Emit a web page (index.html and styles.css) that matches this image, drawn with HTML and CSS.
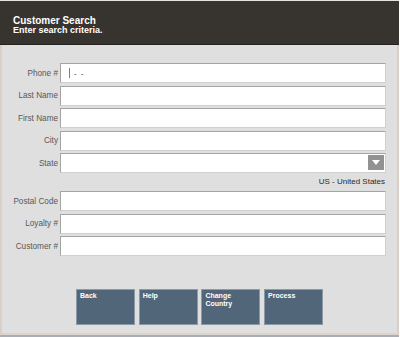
FILE: index.html
```html
<!DOCTYPE html>
<html lang="en">
<head>
    <meta charset="UTF-8">
    <meta name="viewport" content="width=device-width, initial-scale=1.0">
    <title>Customer Search</title>
    <link rel="stylesheet" href="styles.css">
</head>
<body>
    <div class="screen">
        <!-- Title bar -->
        <div class="title-bar">
            <h1>Customer Search</h1>
            <p>Enter search criteria.</p>
        </div>

        <div class="content">
            <!-- Search fields -->
            <form class="search-form">
                <div class="field">
                    <label>Phone #</label>
                    <div class="input phone"><span class="caret"></span><span class="mask">-</span><span class="mask">-</span></div>
                </div>
                <div class="field">
                    <label>Last Name</label>
                    <div class="input"></div>
                </div>
                <div class="field">
                    <label>First Name</label>
                    <div class="input"></div>
                </div>
                <div class="field">
                    <label>City</label>
                    <div class="input"></div>
                </div>
                <div class="field">
                    <label>State</label>
                    <div class="input select"><span class="drop"></span></div>
                </div>
                <div class="country">US - United States</div>
                <div class="field">
                    <label>Postal Code</label>
                    <div class="input"></div>
                </div>
                <div class="field">
                    <label>Loyalty #</label>
                    <div class="input"></div>
                </div>
                <div class="field">
                    <label>Customer #</label>
                    <div class="input"></div>
                </div>
            </form>

            <!-- Action buttons -->
            <div class="actions">
                <button type="button">Back</button>
                <button type="button">Help</button>
                <button type="button">Change Country</button>
                <button type="button">Process</button>
            </div>
        </div>
    </div>
</body>
</html>
```

FILE: styles.css
```css
body {
    margin: 0;
    font-family: "Liberation Sans", Arial, sans-serif;
    background: #ffffff;
}
.screen {
    width: 399px;
    height: 337px;
    box-sizing: border-box;
    border-top: 1px solid #e6e2de;
    border-bottom: 2px solid #a9adb5;
    display: flex;
    flex-direction: column;
}
.title-bar {
    height: 44px;
    box-sizing: border-box;
    background: #37342f;
    border-bottom: 1px solid #24221f;
    padding: 15px 0 0 13px;
    color: #ffffff;
}
.title-bar h1 {
    margin: 0;
    font-size: 10px;
    line-height: 10px;
    font-weight: bold;
}
.title-bar p {
    margin: 0;
    font-size: 9px;
    line-height: 9px;
    font-weight: bold;
}
.content {
    flex-grow: 1;
    background: #dfdfdf;
    border-left: 2px solid #d8cfc8;
    border-right: 2px solid #d8cfc8;
    border-bottom: 2px solid #dcd3cc;
    padding-top: 18px;
    display: flex;
    flex-direction: column;
}
.search-form {
    display: flex;
    flex-direction: column;
    gap: 2.6px;
    margin: 0;
}
.field {
    display: flex;
    align-items: center;
    height: 20px;
}
.field label {
    width: 56px;
    text-align: right;
    font-size: 8.2px;
    color: #585858;
    padding-right: 2px;
}
.input {
    width: 326px;
    height: 20px;
    box-sizing: border-box;
    background: #ffffff;
    border-style: solid;
    border-width: 1px 1px 1px 1px;
    border-color: #a4a4a4 #d0d0d0 #d0d0d0 #a4a4a4;
    display: flex;
    align-items: center;
    position: relative;
}
.phone .caret {
    width: 1px;
    height: 10px;
    background: #808080;
    margin-left: 8px;
}
.phone .mask {
    font-size: 8px;
    color: #333333;
    margin-left: 4px;
}
.select .drop {
    position: absolute;
    right: 1px;
    top: 1px;
    width: 16px;
    height: 15px;
    background: #929292;
}
.select .drop::after {
    content: "";
    position: absolute;
    left: 4px;
    top: 5px;
    border-left: 4px solid transparent;
    border-right: 4px solid transparent;
    border-top: 5px solid #ffffff;
}
.country {
    height: 12.5px;
    font-size: 8px;
    line-height: 12.5px;
    color: #2a2a2a;
    text-align: right;
    padding-right: 12px;
}
.actions {
    display: flex;
    gap: 3.7px;
    margin-top: 33px;
    padding-left: 74px;
}
.actions button {
    width: 59px;
    height: 36px;
    box-sizing: border-box;
    background: #52667a;
    border: 1px solid #8c9aa8;
    color: #ffffff;
    font-family: "Liberation Sans", Arial, sans-serif;
    font-size: 7px;
    line-height: 8px;
    font-weight: bold;
    text-align: left;
    vertical-align: top;
    padding: 2px 18px 0 3px;
    display: flex;
    align-items: flex-start;
}
```
